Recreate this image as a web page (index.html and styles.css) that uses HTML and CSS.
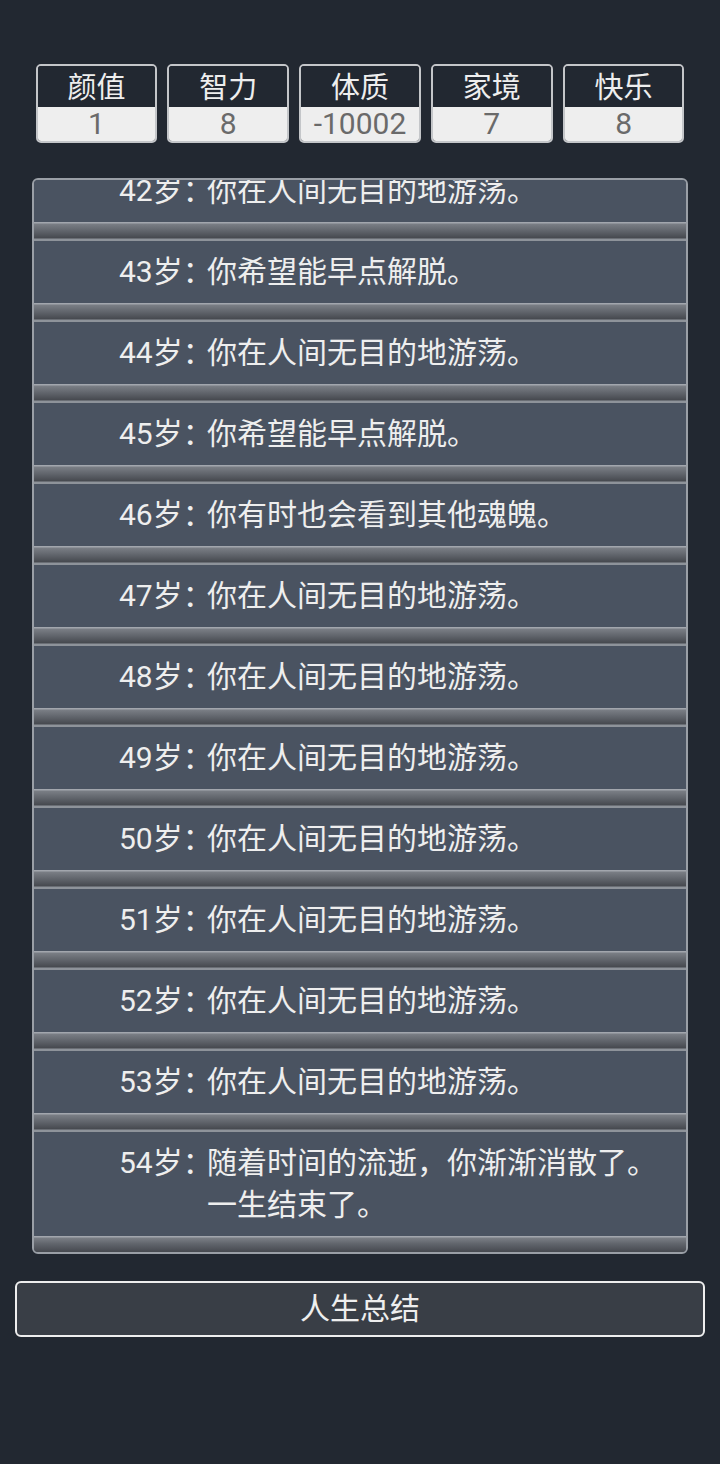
FILE: index.html
```html
<!DOCTYPE html>
<html lang="zh-CN">
<head>
<meta charset="utf-8">
<title>人生重开模拟器</title>
<link rel="stylesheet" href="styles.css">
</head>
<body>
<div class="page">
  <ul class="stats">
    <li class="stat"><div class="stat-name">颜值</div><div class="stat-value">1</div></li>
    <li class="stat"><div class="stat-name">智力</div><div class="stat-value">8</div></li>
    <li class="stat"><div class="stat-name">体质</div><div class="stat-value">-10002</div></li>
    <li class="stat"><div class="stat-name">家境</div><div class="stat-value">7</div></li>
    <li class="stat"><div class="stat-name">快乐</div><div class="stat-value">8</div></li>
  </ul>

  <div class="trajectory">
    <ul class="events">
      <li class="event"><span class="age">42岁：</span><span class="text">你在人间无目的地游荡。</span></li>
      <li class="event"><span class="age">43岁：</span><span class="text">你希望能早点解脱。</span></li>
      <li class="event"><span class="age">44岁：</span><span class="text">你在人间无目的地游荡。</span></li>
      <li class="event"><span class="age">45岁：</span><span class="text">你希望能早点解脱。</span></li>
      <li class="event"><span class="age">46岁：</span><span class="text">你有时也会看到其他魂魄。</span></li>
      <li class="event"><span class="age">47岁：</span><span class="text">你在人间无目的地游荡。</span></li>
      <li class="event"><span class="age">48岁：</span><span class="text">你在人间无目的地游荡。</span></li>
      <li class="event"><span class="age">49岁：</span><span class="text">你在人间无目的地游荡。</span></li>
      <li class="event"><span class="age">50岁：</span><span class="text">你在人间无目的地游荡。</span></li>
      <li class="event"><span class="age">51岁：</span><span class="text">你在人间无目的地游荡。</span></li>
      <li class="event"><span class="age">52岁：</span><span class="text">你在人间无目的地游荡。</span></li>
      <li class="event"><span class="age">53岁：</span><span class="text">你在人间无目的地游荡。</span></li>
      <li class="event"><span class="age">54岁：</span><span class="text">随着时间的流逝，你渐渐消散了。<br>一生结束了。</span></li>
    </ul>
  </div>

  <button class="summary" type="button">人生总结</button>
</div>
</body>
</html>
```

FILE: styles.css
```css
* {
  box-sizing: border-box;
}

html, body {
  margin: 0;
  padding: 0;
  background: #222831;
}

body {
  font-family: Roboto, "Noto Sans CJK SC", "Noto Sans", sans-serif;
  color: #eeeeee;
}

.page {
  width: 720px;
  height: 1464px;
  padding-top: 64px;
  display: flex;
  flex-direction: column;
  align-items: center;
}

.stats {
  list-style: none;
  margin: 0;
  padding: 0;
  width: 649px;
  display: flex;
  gap: 10px;
}

.stat {
  flex: 1;
  border: 2px solid #c4c6c9;
  border-radius: 5px;
  overflow: hidden;
  text-align: center;
}

.stat-name {
  background: #222831;
  color: #eeeeee;
  font-size: 29px;
  padding-top: 3px;
  line-height: 38px;
  height: 41px;
}

.stat-value {
  background: #eeeeee;
  color: #6a6a6a;
  font-size: 30px;
  line-height: 34px;
  height: 34px;
}

.trajectory {
  margin-top: 35px;
  width: 656px;
  height: 1076px;
  border: 2px solid #9a9fa6;
  border-radius: 6px;
  overflow: hidden;
  background: #4a5361;
  display: flex;
  flex-direction: column;
  justify-content: flex-end;
}

.events {
  list-style: none;
  margin: 0;
  padding: 0;
  flex-shrink: 0;
}

.event {
  display: grid;
  grid-template-columns: 88px 1fr;
  padding: 10px 20px 29px 85px;
  font-size: 30px;
  line-height: 42px;
  color: #eeeeee;
  background:
    linear-gradient(#4a5361, #4a5361) top / 100% calc(100% - 19px) no-repeat,
    linear-gradient(#a2a6ad 0, #a2a6ad 1px, #7a7e85 2px, #60646b 9px, #46494f 16px, #8e939a 17px, #8e939a 19px) bottom / 100% 19px no-repeat;
}

.event:last-child {
  padding-bottom: 26px;
  background:
    linear-gradient(#4a5361, #4a5361) top / 100% calc(100% - 16px) no-repeat,
    linear-gradient(#a2a6ad 0, #a2a6ad 1px, #7a7e85 2px, #60646b 8px, #46494f 16px) bottom / 100% 16px no-repeat;
}

.age {
  white-space: nowrap;
}

.text {
  white-space: nowrap;
}

.summary {
  margin-top: 27px;
  width: 690px;
  height: 56px;
  border: 2px solid #eeeeee;
  border-radius: 6px;
  background: #393e46;
  color: #eeeeee;
  font-family: Roboto, "Noto Sans CJK SC", sans-serif;
  font-size: 30px;
  line-height: 52px;
  padding: 0;
  cursor: pointer;
}
```
